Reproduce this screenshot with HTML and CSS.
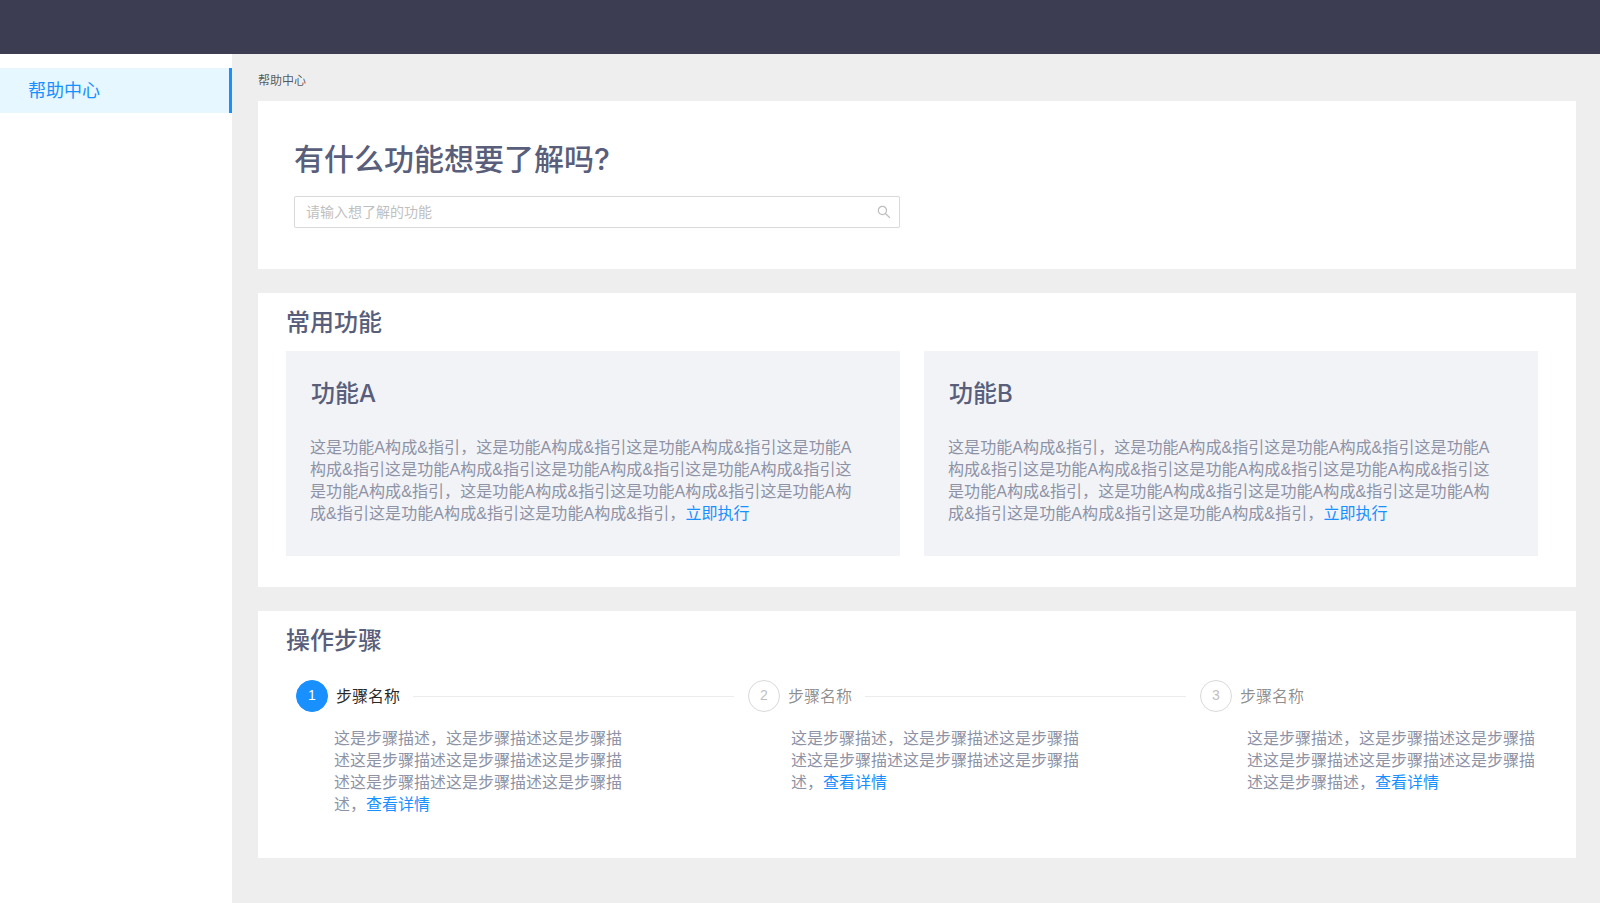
FILE: index.html
```html
<!DOCTYPE html>
<html lang="zh-CN">
<head>
    <meta charset="UTF-8">
    <meta name="viewport" content="width=device-width, initial-scale=1.0">
    <title>帮助中心</title>
    <link rel="stylesheet" href="styles.css">
</head>
<body>
    <header class="topbar"></header>
    <div class="layout">
        <nav class="sidebar">
            <a class="menu-item active">帮助中心</a>
        </nav>
        <main class="main">
            <div class="breadcrumb">帮助中心</div>

            <section class="hero">
                <h1 class="hero-title">有什么功能想要了解吗?</h1>
                <div class="search">
                    <input class="search-input" type="text" placeholder="请输入想了解的功能">
                    <svg class="search-icon" viewBox="64 64 896 896" fill="currentColor">
                        <path d="M909.6 854.5L649.9 594.8C690.2 542.7 712 479 712 412c0-80.2-31.3-155.4-87.9-212.1-56.6-56.7-132-87.9-212.1-87.9s-155.5 31.3-212.1 87.9C143.2 256.5 112 331.8 112 412c0 80.1 31.3 155.5 87.9 212.1C256.5 680.8 331.8 712 412 712c67 0 130.6-21.8 182.7-62l259.7 259.6a8.2 8.2 0 0 0 11.6 0l43.6-43.5a8.2 8.2 0 0 0 0-11.6zM570.4 570.4C528 612.7 471.8 636 412 636s-116-23.3-158.4-65.6C211.3 528 188 471.8 188 412s23.3-116 65.6-158.4C296 211.3 352.2 188 412 188s116 23.3 158.4 65.6S636 352.2 636 412s-23.3 116-65.6 158.4z"/>
                    </svg>
                </div>
            </section>

            <section class="panel panel-features">
                <h2 class="panel-title">常用功能</h2>
                <div class="features">
                    <article class="feature">
                        <h3 class="feature-title">功能A</h3>
                        <p class="feature-text">这是功能A构成&amp;指引，这是功能A构成&amp;指引这是功能A构成&amp;指引这是功能A构成&amp;指引这是功能A构成&amp;指引这是功能A构成&amp;指引这是功能A构成&amp;指引这是功能A构成&amp;指引，这是功能A构成&amp;指引这是功能A构成&amp;指引这是功能A构成&amp;指引这是功能A构成&amp;指引这是功能A构成&amp;指引，<a class="link">立即执行</a></p>
                    </article>
                    <article class="feature">
                        <h3 class="feature-title">功能B</h3>
                        <p class="feature-text">这是功能A构成&amp;指引，这是功能A构成&amp;指引这是功能A构成&amp;指引这是功能A构成&amp;指引这是功能A构成&amp;指引这是功能A构成&amp;指引这是功能A构成&amp;指引这是功能A构成&amp;指引，这是功能A构成&amp;指引这是功能A构成&amp;指引这是功能A构成&amp;指引这是功能A构成&amp;指引这是功能A构成&amp;指引，<a class="link">立即执行</a></p>
                    </article>
                </div>
            </section>

            <section class="panel panel-steps">
                <h2 class="panel-title">操作步骤</h2>
                <div class="steps">
                    <div class="step current">
                        <div class="step-head">
                            <span class="step-num">1</span>
                            <span class="step-name">步骤名称</span>
                            <span class="step-line"></span>
                        </div>
                        <p class="step-desc">这是步骤描述，这是步骤描述这是步骤描述这是步骤描述这是步骤描述这是步骤描述这是步骤描述这是步骤描述这是步骤描述，<a class="link">查看详情</a></p>
                    </div>
                    <div class="step">
                        <div class="step-head">
                            <span class="step-num">2</span>
                            <span class="step-name">步骤名称</span>
                            <span class="step-line"></span>
                        </div>
                        <p class="step-desc">这是步骤描述，这是步骤描述这是步骤描述这是步骤描述这是步骤描述这是步骤描述，<a class="link">查看详情</a></p>
                    </div>
                    <div class="step">
                        <div class="step-head">
                            <span class="step-num">3</span>
                            <span class="step-name">步骤名称</span>
                        </div>
                        <p class="step-desc">这是步骤描述，这是步骤描述这是步骤描述这是步骤描述这是步骤描述这是步骤描述这是步骤描述，<a class="link">查看详情</a></p>
                    </div>
                </div>
            </section>
        </main>
    </div>
</body>
</html>
```

FILE: styles.css
```css
* {
    margin: 0;
    padding: 0;
    box-sizing: border-box;
}

html, body {
    height: 100%;
    overflow: hidden;
}

body {
    display: flex;
    flex-direction: column;
    background-color: #eeeeee;
    font-family: "Liberation Sans", "Noto Sans CJK SC", sans-serif;
    font-size: 16px;
}

.topbar {
    height: 54px;
    flex: none;
    background-color: #3c3d52;
}

.layout {
    flex: 1;
    display: flex;
}

.sidebar {
    width: 232px;
    flex: none;
    padding-top: 14px;
    background-color: #ffffff;
}

.menu-item {
    display: block;
    height: 45px;
    padding-left: 28px;
    font-size: 18px;
    line-height: 47px;
    color: #1890ff;
}

.menu-item.active {
    background-color: #e6f7ff;
    border-right: 3px solid #1890ff;
}

.main {
    flex: 1;
    padding: 0 24px 0 26px;
}

.breadcrumb {
    height: 47px;
    padding-top: 18px;
    font-size: 12px;
    line-height: 18px;
    color: rgba(0, 0, 0, 0.65);
}

/* Cabecera con buscador */
.hero {
    height: 168px;
    padding: 37px 36px 0;
    background-color: #ffffff;
}

.hero-title {
    font-family: Inter, "Noto Sans CJK SC", sans-serif;
    font-size: 30px;
    line-height: 42px;
    font-weight: 500;
    color: #595e7a;
}

.search {
    display: flex;
    align-items: center;
    width: 606px;
    height: 32px;
    margin-top: 16px;
    padding: 0 8px 0 11px;
    background-color: #ffffff;
    border: 1px solid #d9d9d9;
    border-radius: 2px;
}

.search-input {
    flex: 1;
    border: 0;
    outline: 0;
    font-family: inherit;
    font-size: 14px;
    color: #595e7a;
}

.search-input::placeholder {
    color: #bfbfbf;
}

.search-icon {
    width: 14px;
    height: 14px;
    color: #bfbfbf;
}

.panel {
    margin-top: 24px;
    padding: 14px 38px 0 28px;
    background-color: #ffffff;
}

.panel-features {
    height: 294px;
}

.panel-steps {
    height: 247px;
}

.panel-title {
    font-family: Inter, "Noto Sans CJK SC", sans-serif;
    font-size: 24px;
    line-height: 32px;
    font-weight: 500;
    color: #595e7a;
}

.features {
    display: grid;
    grid-template-columns: 614px 614px;
    gap: 24px;
    margin-top: 12px;
}

.feature {
    height: 205px;
    padding: 26px 24px 0 25px;
    background-color: #f2f3f7;
}

.feature-title {
    font-family: Inter, "Noto Sans CJK SC", sans-serif;
    font-size: 24px;
    line-height: 34px;
    font-weight: 500;
    color: #595e7a;
}

.feature-text {
    margin: 26px 18px 0 -1px;
    line-height: 22px;
    letter-spacing: 0.08px;
    color: #8d92a5;
}

.link {
    color: #1890ff;
}

.steps {
    display: grid;
    grid-template-columns: 452px 452px 1fr;
    margin-top: 23px;
    padding-left: 10px;
}

.step-head {
    display: flex;
    align-items: center;
    height: 32px;
}

.step-num {
    width: 32px;
    height: 32px;
    flex: none;
    border: 1px solid #d9d9d9;
    border-radius: 50%;
    font-size: 14px;
    line-height: 28px;
    text-align: center;
    color: #bfbfbf;
}

.step-name {
    margin-left: 8px;
    padding-bottom: 2px;
    color: rgba(0, 0, 0, 0.45);
}

.step-line {
    flex: 1;
    height: 1px;
    margin: 0 14px 0 13px;
    background-color: #ececec;
}

.step.current .step-num {
    background-color: #1890ff;
    border-color: #1890ff;
    color: #ffffff;
}

.step.current .step-name {
    color: rgba(0, 0, 0, 0.85);
}

.step-desc {
    width: 290px;
    margin-top: 16px;
    line-height: 22px;
    color: #8d92a5;
}

.step:nth-child(1) .step-desc {
    margin-left: 38px;
}

.step:nth-child(2) .step-desc {
    margin-left: 43px;
}

.step:nth-child(3) .step-desc {
    margin-left: 47px;
}
```
